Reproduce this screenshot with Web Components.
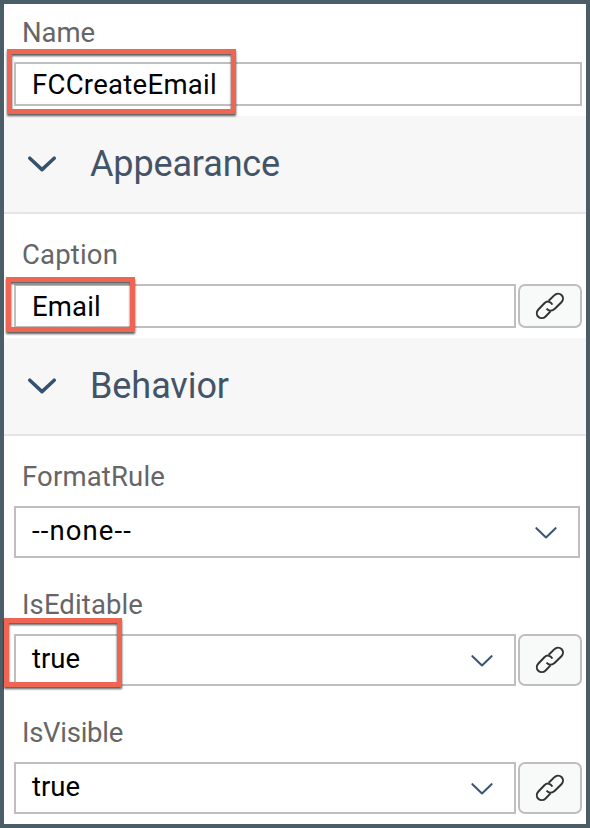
<!DOCTYPE html>
<html lang="en">
<head>
<meta charset="utf-8">
<title>Properties</title>
<style>
html,body{margin:0;height:100%}
body{font-family:Roboto,"Liberation Sans",sans-serif;overflow:hidden}
</style>
</head>
<body>
<property-panel>
  <property-field label="Name" lw="73" gap="12"><text-box fit="185" mark="-9px -15px auto auto/229px/65px">FCCreateEmail</text-box></property-field>
  <section-header fit="190">Appearance</section-header>
  <property-field label="Caption" lw="96" gap="24"><text-box fit="69" mark="-10px -9px auto auto/129px/55px">Email</text-box><link-button></link-button></property-field>
  <section-header fit="139">Behavior</section-header>
  <property-field label="FormatRule" lw="143" gap="24"><drop-down class="inset" fit="100">--none--</drop-down></property-field>
  <property-field label="IsEditable" lw="121" gap="20"><drop-down fit="48" mark="-12px -18px auto auto/118px/69px">true</drop-down><link-button></link-button></property-field>
  <property-field label="IsVisible" lw="101" gap="20"><drop-down fit="48">true</drop-down><link-button></link-button></property-field>
</property-panel>
<script>
const define = (name, html, setup) => customElements.define(name, class extends HTMLElement {
  connectedCallback() {
    if (this.shadowRoot) return;
    const root = this.attachShadow({mode: 'open'});
    root.innerHTML = html;
    if (setup) setup(this, root);
  }
});
// Spreads the letters of a line over a given width in pixels.
const fit = (span, width, text) => {
  if (!width) return;
  const natural = span.getBoundingClientRect().width;
  span.style.letterSpacing = ((width - natural) / text.trim().length) + 'px';
};

define('property-panel', `<style>
:host{display:flex;flex-direction:column;box-sizing:border-box;width:590px;height:828px;border:4px solid #4b5d66;background:#fff}
</style><slot></slot>`);

define('section-header', `<style>
:host{display:flex;align-items:center;box-sizing:border-box;height:98px;padding:0 0 0 24px;background:#f7f7f7;border-bottom:2px solid #e5e5e5;color:#445468;font-size:36px;line-height:44px;flex:none}
svg{flex:none;margin-right:34px}
span{white-space:nowrap}
</style><svg width="28" height="18" viewBox="0 0 28 18"><path d="M1.8 3.2 14 14.6 26.2 3.2" fill="none" stroke="#34516e" stroke-width="3.5" stroke-linecap="round" stroke-linejoin="round"/></svg><span><slot></slot></span>`,
(el, root) => fit(root.querySelector('span'), +el.getAttribute('fit'), el.textContent));

define('property-field', `<style>
:host{display:block;flex:none;padding:0 4px 10px 10px}
.label{display:flex;height:34px;margin:0 0 12px;padding-left:8px;font-size:27.5px;line-height:34px;color:#666;white-space:nowrap}
.row{display:flex;gap:2px}
</style><div class="label"><span></span></div><div class="row"><slot></slot></div>`,
(el, root) => {
  el.style.paddingTop = el.getAttribute('gap') + 'px';
  const span = root.querySelector('span');
  span.textContent = el.getAttribute('label');
  fit(span, +el.getAttribute('lw'), span.textContent);
});

const box = `
:host{display:flex;position:relative;flex:1;min-width:0;box-sizing:border-box;border:2px solid #bfbfbf;background:#fff;color:#000;font-size:27.5px;padding-left:16px;justify-content:space-between}
span{white-space:nowrap}
i{display:none;position:absolute;box-sizing:border-box;border:5px solid #ef6553;filter:drop-shadow(0 2.5px 1px rgba(0,0,0,.65));z-index:2}`;
const setupBox = (el, root) => {
  fit(root.querySelector('span'), +el.getAttribute('fit'), el.textContent);
  const mark = el.getAttribute('mark');
  if (!mark) return;
  const [offset, width, height] = mark.split('/');
  const [left, top] = offset.split(' ');
  Object.assign(root.querySelector('i').style, {display: 'block', left, top, width, height});
};
define('text-box', `<style>${box}
:host{height:44px;line-height:42px}
</style><span><slot></slot></span><i></i>`, setupBox);
define('drop-down', `<style>${box}
:host{height:52px;line-height:46px}
:host(.inset){margin-right:2px}
svg{margin:18px 20px 0 0}
</style><span><slot></slot></span><svg width="24" height="14" viewBox="0 0 24 14"><path d="M2.4 2.2 12 11.4 21.6 2.2" fill="none" stroke="#3a5777" stroke-width="2.1" stroke-linecap="round" stroke-linejoin="round"/></svg><i></i>`, setupBox);

define('link-button', `<style>
:host{display:flex;align-items:center;justify-content:center;flex:none;box-sizing:border-box;width:64px;border:2px solid #bfbfbf;border-radius:7px;background:#f8faf9}
</style><svg width="32" height="34" viewBox="0 0 32 34"><g fill="none" stroke="#333" stroke-width="2" stroke-linecap="butt" stroke-linejoin="round"><path d="M14.7 11.8 20.2 6.4C22.4 4.2 25.6 4.2 27.5 6C29.5 8 29.5 11 27.4 13.2L20.8 19.8C18.2 22.4 14.7 22.2 12.5 19.6"/><path d="M18.4 15.6C16.8 12.2 13 11.6 10.4 14.2L4.4 20.5C2.3 22.7 2.4 25.8 4.3 27.7C6.3 29.6 9.4 29.6 11.6 27.5L16.5 22.4"/></g></svg>`);
</script>
</body>
</html>
